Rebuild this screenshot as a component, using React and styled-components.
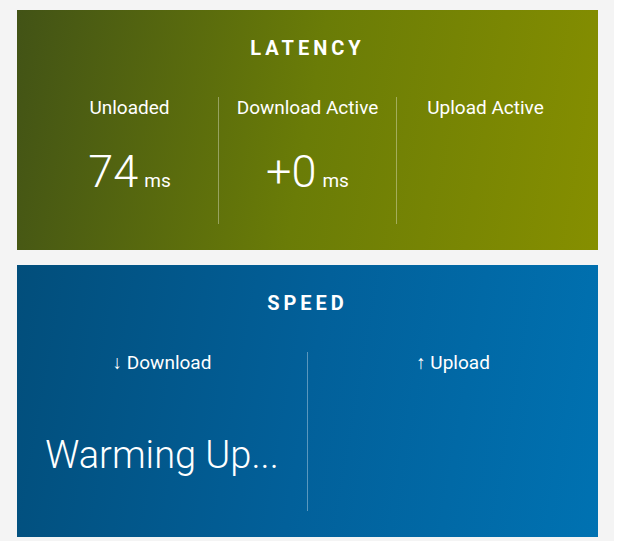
import React from 'react'
import styled, { createGlobalStyle } from 'styled-components'

const GlobalStyle = createGlobalStyle`
  body {
    margin: 0;
    background: #ffffff;
    font-family: Roboto, "Liberation Sans", sans-serif;
    color: #ffffff;
  }
`

const Page = styled.div`
  width: 581px;
  padding: 10px 16px 4px 17px;
  background: #f4f4f4;
  display: flex;
  flex-direction: column;
  gap: 15px;
`

const Card = styled.section`
  background: ${p => p.bg};
  padding: ${p => (p.padded ? '26px 24px 26px' : '26px 0 26px')};
  display: flex;
  flex-direction: column;
`

const Title = styled.h2`
  margin: 0;
  font-size: 20px;
  line-height: 24px;
  font-weight: 700;
  letter-spacing: 4px;
  text-align: center;
`

const Row = styled.div`
  margin-top: 37px;
  display: flex;
`

const Column = styled.div`
  flex: 1 1 0;
  display: flex;
  flex-direction: column;
  align-items: center;
  padding-bottom: ${p => p.bottom}px;

  & + & {
    border-left: 1px solid rgba(255, 255, 255, 0.35);
  }
`

const Label = styled.div`
  font-size: 19px;
  line-height: 22px;
  font-weight: 400;
`

const Value = styled.div`
  margin-top: 29px;
  display: flex;
  align-items: baseline;
  line-height: 48px;
  height: 48px;
`

const Number = styled.span`
  font-size: 45px;
  font-weight: 300;
`

const Unit = styled.span`
  margin-left: 6px;
  font-size: 19px;
  font-weight: 400;
`

const Status = styled.div`
  margin-top: 56px;
  font-size: 38px;
  line-height: 50px;
  font-weight: 300;
`

const latency = [
  { label: 'Unloaded', value: '74' },
  { label: 'Download Active', value: '+0' },
  { label: 'Upload Active', value: null },
]

export default function App() {
  return (
    <>
      <GlobalStyle />
      <Page>
        <Card padded bg="linear-gradient(100deg, #425316 0%, #6a7c07 50%, #868f00 100%)">
          <Title>LATENCY</Title>
          <Row>
            {latency.map(item => (
              <Column key={item.label} bottom={28}>
                <Label>{item.label}</Label>
                {item.value ? (
                  <Value>
                    <Number>{item.value}</Number>
                    <Unit>ms</Unit>
                  </Value>
                ) : null}
              </Column>
            ))}
          </Row>
        </Card>

        <Card bg="linear-gradient(100deg, #024e7b 0%, #02609a 50%, #0072b2 100%)">
          <Title>SPEED</Title>
          <Row>
            <Column bottom={31}>
              <Label>↓ Download</Label>
              <Status>Warming Up...</Status>
            </Column>
            <Column bottom={31}>
              <Label>↑ Upload</Label>
            </Column>
          </Row>
        </Card>
      </Page>
    </>
  )
}
